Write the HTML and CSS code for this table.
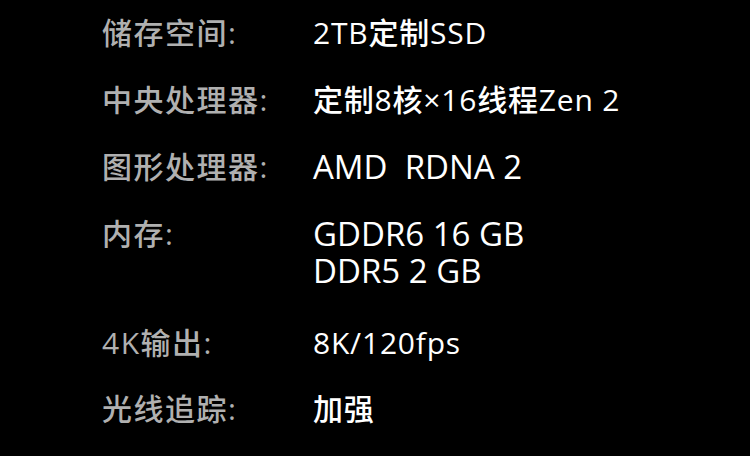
FILE: index.html
```html
<!DOCTYPE html>
<html lang="zh">
<head>
<meta charset="utf-8">
<link rel="stylesheet" href="styles.css">
</head>
<body>
<div class="specs">
  <div class="row r1"><div class="label">储存空间:</div><div class="value">2TB定制SSD</div></div>
  <div class="row r2"><div class="label">中央处理器:</div><div class="value">定制8核×16线程Zen 2</div></div>
  <div class="row r3"><div class="label">图形处理器:</div><div class="value latin">AMD&nbsp; RDNA 2</div></div>
  <div class="row r4"><div class="label">内存:</div><div class="value latin"><div class="line">GDDR6 16 GB</div><div class="line">DDR5 2 GB</div></div></div>
  <div class="row r5"><div class="label">4K输出:</div><div class="value">8K/120fps</div></div>
  <div class="row r6"><div class="label">光线追踪:</div><div class="value">加强</div></div>
</div>
</body>
</html>
```
FILE: styles.css
```css
html, body {
  margin: 0;
  padding: 0;
  background: #000;
}
body {
  width: 750px;
  height: 456px;
  overflow: hidden;
  font-family: "Open Sans", "Noto Sans CJK SC", sans-serif;
}
.specs {
  display: flex;
  flex-direction: column;
  padding: 14px 0 0 102px;
}
.row {
  display: grid;
  grid-template-columns: 211px auto;
  line-height: 37px;
}
.r2, .r3, .r4 { margin-top: 30px; }
.r5 { margin-top: 35px; }
.r6 { margin-top: 29px; }
.label {
  color: #b0b0b0;
  font-size: 30px;
  font-weight: 500;
  letter-spacing: 1.5px;
}
.value {
  color: #fff;
  font-size: 30px;
  font-weight: 500;
  letter-spacing: 0.8px;
}
.value.latin {
  font-size: 33px;
  font-weight: 400;
  letter-spacing: 0;
  line-height: 37px;
}
```
